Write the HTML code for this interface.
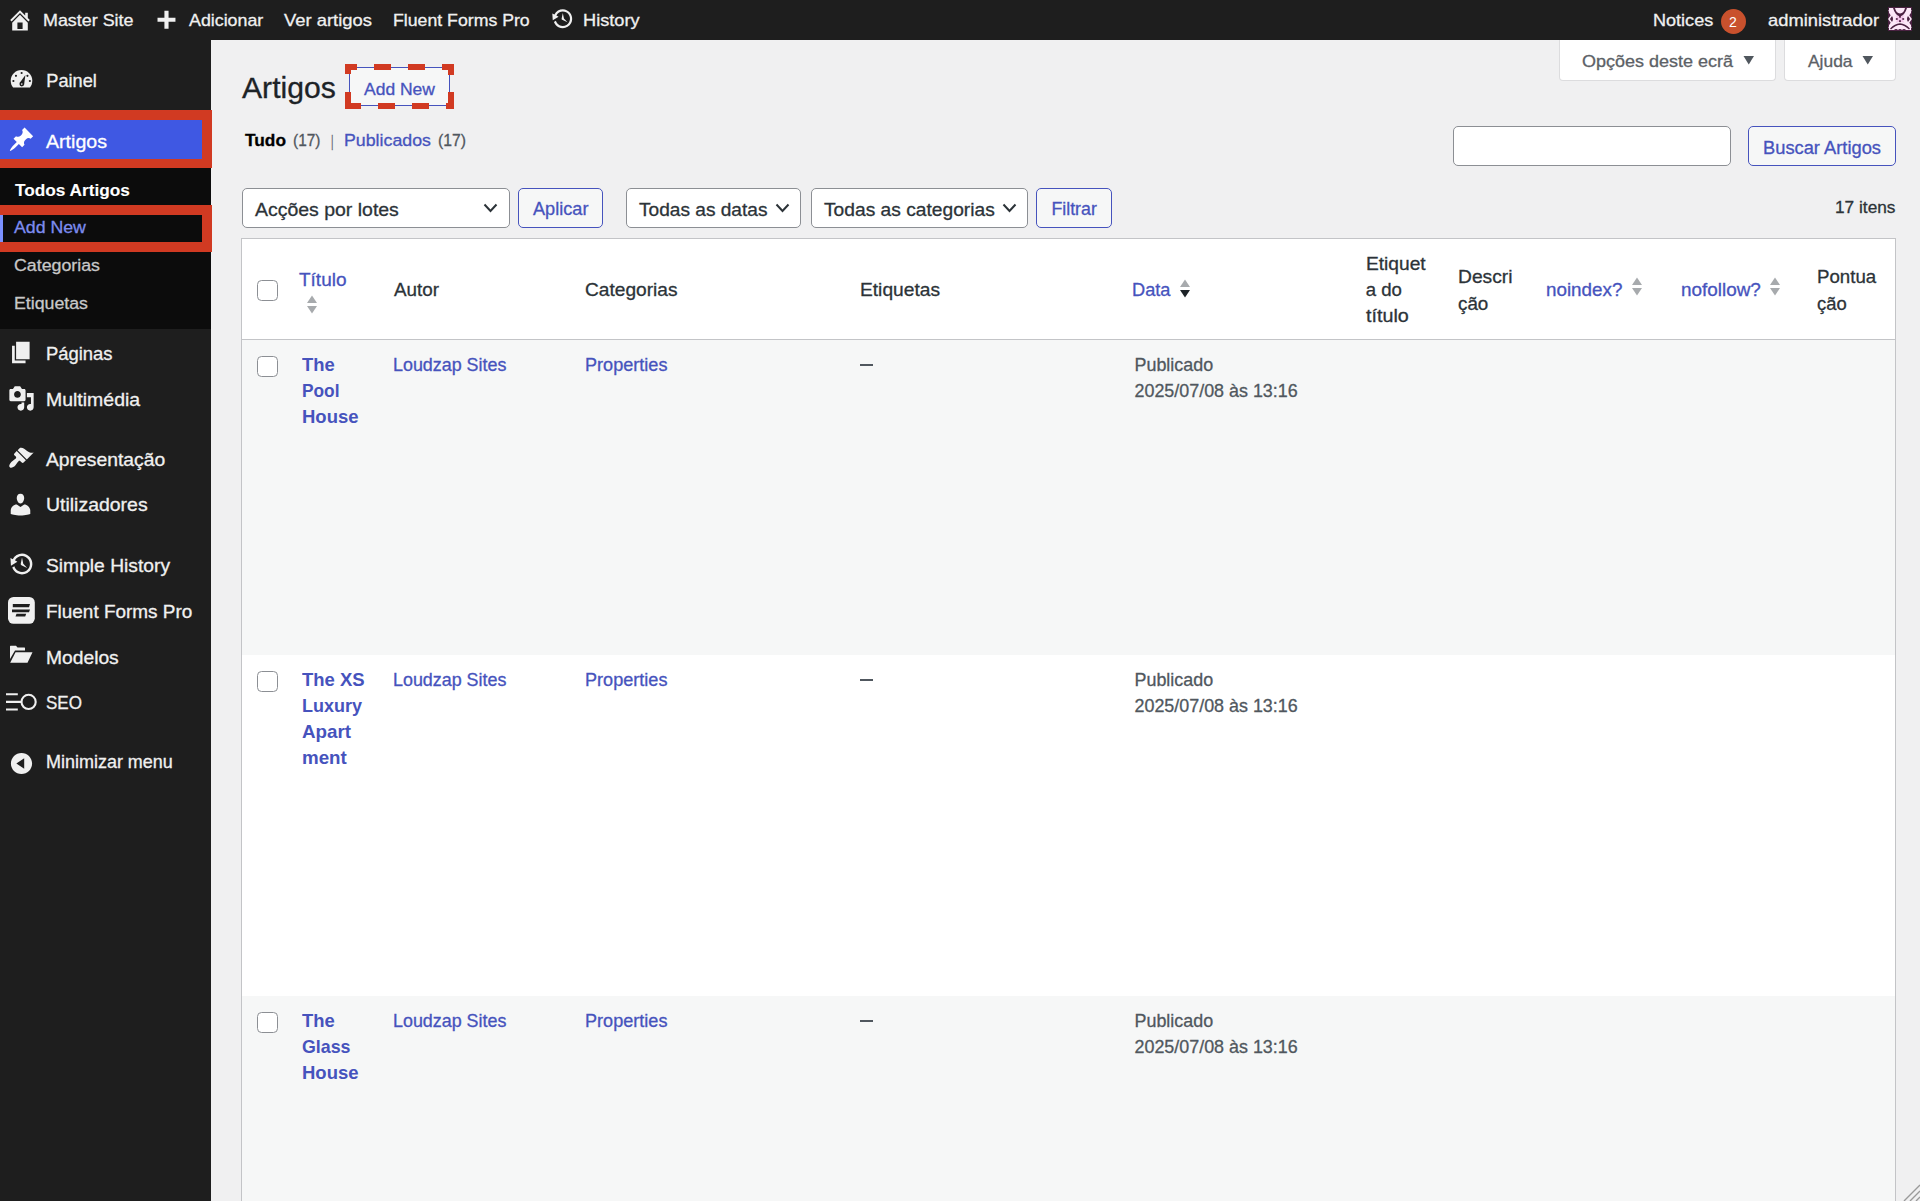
<!DOCTYPE html>
<html><head><meta charset="utf-8"><title>Artigos</title>
<style>
html,body{margin:0;padding:0;width:1920px;height:1201px;overflow:hidden;background:#f0f0f1;font-family:"Liberation Sans",sans-serif}
.t{position:absolute;white-space:nowrap;line-height:1;transform-origin:0 0;-webkit-text-stroke:0.3px currentColor}
svg{display:block}
</style></head><body>
<div style="position:absolute;left:0px;top:0px;width:1920px;height:1201px;background:#f0f0f1"></div>
<div style="position:absolute;left:0px;top:0px;width:1920px;height:40px;background:#1e1e1e"></div>
<div style="position:absolute;left:0px;top:40px;width:211px;height:1161px;background:#1e1e1e"></div>
<div style="position:absolute;left:0px;top:168px;width:211px;height:161px;background:#0c0c0c"></div>
<div style="position:absolute;left:0px;top:110px;width:212px;height:58px;background:#d13a22"></div>
<div style="position:absolute;left:0px;top:120px;width:202px;height:39px;background:#3f58e3"></div>
<div style="position:absolute;left:0px;top:205px;width:212px;height:47px;background:#d13a22"></div>
<div style="position:absolute;left:0px;top:215px;width:202px;height:27px;background:#0c0c0c"></div>
<div style="position:absolute;left:0px;top:215px;width:3px;height:27px;background:#7b90ff"></div>
<div class="t" style="left:42.50px;top:12.31px;font-size:17.0px;color:#f0f0f0;transform:scaleX(1.0527);">Master Site</div>
<div class="t" style="left:188.75px;top:12.31px;font-size:17.0px;color:#f0f0f0;transform:scaleX(1.0476);">Adicionar</div>
<div class="t" style="left:284.00px;top:12.31px;font-size:17.0px;color:#f0f0f0;transform:scaleX(1.0829);">Ver artigos</div>
<div class="t" style="left:392.80px;top:12.31px;font-size:17.0px;color:#f0f0f0;transform:scaleX(1.0411);">Fluent Forms Pro</div>
<div class="t" style="left:583.00px;top:12.31px;font-size:17.0px;color:#f0f0f0;transform:scaleX(1.0702);">History</div>
<div class="t" style="left:1652.80px;top:12.31px;font-size:17.0px;color:#f0f0f0;transform:scaleX(1.0621);">Notices</div>
<div class="t" style="left:1768.00px;top:12.31px;font-size:17.0px;color:#f0f0f0;transform:scaleX(1.0778);">administrador</div>
<div style="position:absolute;left:1721px;top:8.5px;width:25px;height:25.0px;background:#c9512d;border-radius:50%"></div>
<div class="t" style="left:1729.20px;top:14.00px;font-size:15.0px;color:#ffffff;transform:scaleX(0.9353);-webkit-text-stroke:0;">2</div>
<div class="t" style="left:46.25px;top:71.69px;font-size:18.2px;color:#f0f0f0;">Painel</div>
<div class="t" style="left:46.00px;top:132.79px;font-size:18.2px;color:#ffffff;transform:scaleX(1.0770);">Artigos</div>
<div class="t" style="left:15.00px;top:182.47px;font-size:17.4px;color:#ffffff;font-weight:700;transform:scaleX(0.9915);-webkit-text-stroke:0.1px #fff;">Todos Artigos</div>
<div class="t" style="left:14.00px;top:219.47px;font-size:17.4px;color:#7d8cf0;transform:scaleX(1.0192);">Add New</div>
<div class="t" style="left:14.00px;top:257.47px;font-size:17.4px;color:#c8c8c8;transform:scaleX(1.0220);">Categorias</div>
<div class="t" style="left:14.00px;top:295.07px;font-size:17.4px;color:#c8c8c8;transform:scaleX(1.0201);">Etiquetas</div>
<div class="t" style="left:45.80px;top:345.29px;font-size:18.2px;color:#f0f0f0;transform:scaleX(1.0125);">Páginas</div>
<div class="t" style="left:45.80px;top:390.59px;font-size:18.2px;color:#f0f0f0;transform:scaleX(1.0703);">Multimédia</div>
<div class="t" style="left:45.80px;top:450.59px;font-size:18.2px;color:#f0f0f0;transform:scaleX(1.0613);">Apresentação</div>
<div class="t" style="left:45.80px;top:496.49px;font-size:18.2px;color:#f0f0f0;transform:scaleX(1.0697);">Utilizadores</div>
<div class="t" style="left:45.90px;top:556.59px;font-size:18.2px;color:#f0f0f0;transform:scaleX(1.0578);">Simple History</div>
<div class="t" style="left:45.90px;top:603.09px;font-size:18.2px;color:#f0f0f0;transform:scaleX(1.0414);">Fluent Forms Pro</div>
<div class="t" style="left:45.90px;top:648.59px;font-size:18.2px;color:#f0f0f0;transform:scaleX(1.0582);">Modelos</div>
<div class="t" style="left:45.90px;top:694.09px;font-size:18.2px;color:#f0f0f0;transform:scaleX(0.9366);">SEO</div>
<div class="t" style="left:45.90px;top:752.99px;font-size:18.2px;color:#f0f0f0;transform:scaleX(0.9880);">Minimizar menu</div>
<div class="t" style="left:241.70px;top:73.43px;font-size:29.5px;color:#1d2327;transform:scaleX(1.0217);">Artigos</div>
<div style="position:absolute;left:349px;top:67px;width:101px;height:39px;background:#f6f7f7;border:1px solid #4653bd;border-radius:3px;box-sizing:border-box"></div>
<div style="position:absolute;left:344.6px;top:63.7px;width:12.399999999999977px;height:6.0px;background:#d13a22"></div>
<div style="position:absolute;left:373.9px;top:63.7px;width:17.600000000000023px;height:6.0px;background:#d13a22"></div>
<div style="position:absolute;left:407.7px;top:63.7px;width:17.600000000000023px;height:6.0px;background:#d13a22"></div>
<div style="position:absolute;left:442.3px;top:63.7px;width:11.399999999999977px;height:6.0px;background:#d13a22"></div>
<div style="position:absolute;left:344.6px;top:102.6px;width:16.299999999999955px;height:6.0px;background:#d13a22"></div>
<div style="position:absolute;left:377.9px;top:102.6px;width:17.5px;height:6.0px;background:#d13a22"></div>
<div style="position:absolute;left:412.3px;top:102.6px;width:16.899999999999977px;height:6.0px;background:#d13a22"></div>
<div style="position:absolute;left:445.6px;top:102.6px;width:8.099999999999966px;height:6.0px;background:#d13a22"></div>
<div style="position:absolute;left:344.6px;top:63.7px;width:6.0px;height:10.399999999999991px;background:#d13a22"></div>
<div style="position:absolute;left:344.6px;top:91.7px;width:6.0px;height:16.89999999999999px;background:#d13a22"></div>
<div style="position:absolute;left:447.7px;top:63.7px;width:6.0px;height:11.700000000000003px;background:#d13a22"></div>
<div style="position:absolute;left:447.7px;top:92.3px;width:6.0px;height:16.299999999999997px;background:#d13a22"></div>
<div class="t" style="left:364.00px;top:80.53px;font-size:16.5px;color:#4653bd;transform:scaleX(1.0599);">Add New</div>
<div class="t" style="left:245.00px;top:133.08px;font-size:16.8px;color:#000000;font-weight:700;transform:scaleX(1.0302);">Tudo</div>
<div class="t" style="left:292.50px;top:133.08px;font-size:16.8px;color:#50575e;transform:scaleX(0.9206);">(17)</div>
<div class="t" style="left:331.00px;top:134.18px;font-size:16.8px;color:#646970;transform:scaleX(0.5723);">|</div>
<div class="t" style="left:344.00px;top:133.08px;font-size:16.8px;color:#4653bd;transform:scaleX(1.0586);">Publicados</div>
<div class="t" style="left:437.70px;top:133.08px;font-size:16.8px;color:#50575e;transform:scaleX(0.9374);">(17)</div>
<div style="position:absolute;left:1559px;top:40px;width:217px;height:41px;background:#fff;border:1px solid #dcdcde;border-top:none;border-radius:0 0 4px 4px;box-sizing:border-box"></div>
<div style="position:absolute;left:1784px;top:40px;width:112px;height:41px;background:#fff;border:1px solid #dcdcde;border-top:none;border-radius:0 0 4px 4px;box-sizing:border-box"></div>
<div class="t" style="left:1582.00px;top:52.51px;font-size:17.0px;color:#5c6166;transform:scaleX(1.0582);">Opções deste ecrã</div>
<div class="t" style="left:1808.00px;top:52.51px;font-size:17.0px;color:#5c6166;transform:scaleX(1.0233);">Ajuda</div>
<svg style="position:absolute;left:1743px;top:55px" width="12" height="10"><path d="M0.5 1 L11 1 L5.75 9.5 Z" fill="#50575e"/></svg>
<svg style="position:absolute;left:1862px;top:55px" width="12" height="10"><path d="M0.5 1 L11 1 L5.75 9.5 Z" fill="#50575e"/></svg>
<div style="position:absolute;left:1453px;top:126px;width:278px;height:40px;background:#fff;border:1px solid #8c8f94;border-radius:5px;box-sizing:border-box"></div>
<div style="position:absolute;left:1748px;top:126px;width:148px;height:40px;background:#f6f7f7;border:1px solid #4653bd;border-radius:5px;box-sizing:border-box"></div>
<div class="t" style="left:1762.50px;top:139.75px;font-size:17.6px;color:#4653bd;transform:scaleX(1.0399);">Buscar Artigos</div>
<div class="t" style="left:1834.50px;top:199.34px;font-size:17.2px;color:#2c3338;transform:scaleX(1.0044);">17 itens</div>
<div style="position:absolute;left:242px;top:188px;width:268px;height:40px;background:#fff;border:1px solid #8c8f94;border-radius:5px;box-sizing:border-box"></div>
<div class="t" style="left:254.50px;top:200.76px;font-size:18.6px;color:#2c3338;transform:scaleX(1.0465);">Acções por lotes</div>
<svg style="position:absolute;left:482.5px;top:202px" width="16" height="12"><path d="M1.5 2.5 L7.5 9 L13.5 2.5" fill="none" stroke="#2c3338" stroke-width="2"/></svg>
<div style="position:absolute;left:518px;top:188px;width:85px;height:40px;background:#f6f7f7;border:1px solid #4653bd;border-radius:5px;box-sizing:border-box"></div>
<div class="t" style="left:533.00px;top:201.43px;font-size:17.8px;color:#4653bd;transform:scaleX(1.0199);">Aplicar</div>
<div style="position:absolute;left:626px;top:188px;width:175px;height:40px;background:#fff;border:1px solid #8c8f94;border-radius:5px;box-sizing:border-box"></div>
<div class="t" style="left:638.50px;top:200.76px;font-size:18.6px;color:#2c3338;transform:scaleX(1.0270);">Todas as datas</div>
<svg style="position:absolute;left:775px;top:202px" width="16" height="12"><path d="M1.5 2.5 L7.5 9 L13.5 2.5" fill="none" stroke="#2c3338" stroke-width="2"/></svg>
<div style="position:absolute;left:811px;top:188px;width:217px;height:40px;background:#fff;border:1px solid #8c8f94;border-radius:5px;box-sizing:border-box"></div>
<div class="t" style="left:823.50px;top:200.76px;font-size:18.6px;color:#2c3338;transform:scaleX(1.0325);">Todas as categorias</div>
<svg style="position:absolute;left:1002px;top:202px" width="16" height="12"><path d="M1.5 2.5 L7.5 9 L13.5 2.5" fill="none" stroke="#2c3338" stroke-width="2"/></svg>
<div style="position:absolute;left:1036px;top:188px;width:76px;height:40px;background:#f6f7f7;border:1px solid #4653bd;border-radius:5px;box-sizing:border-box"></div>
<div class="t" style="left:1051.40px;top:201.43px;font-size:17.8px;color:#4653bd;">Filtrar</div>
<div style="position:absolute;left:241px;top:238px;width:1655px;height:963px;background:#fff;border:1px solid #c3c4c7;border-bottom:none;box-sizing:border-box"></div>
<div style="position:absolute;left:242px;top:339px;width:1653px;height:1px;background:#c3c4c7"></div>
<div style="position:absolute;left:242px;top:340px;width:1653px;height:315px;background:#f6f7f7"></div>
<div style="position:absolute;left:242px;top:996px;width:1653px;height:205px;background:#f6f7f7"></div>
<div style="position:absolute;left:257px;top:280px;width:21px;height:21px;background:#fff;border:1.3px solid #8c8f94;border-radius:4.5px;box-sizing:border-box"></div>
<div class="t" style="left:298.75px;top:270.66px;font-size:18.6px;color:#4653bd;transform:scaleX(1.0211);">Título</div>
<div class="t" style="left:393.75px;top:281.16px;font-size:18.6px;color:#2c3338;transform:scaleX(1.0123);">Autor</div>
<div class="t" style="left:585.00px;top:281.16px;font-size:18.6px;color:#2c3338;transform:scaleX(1.0284);">Categorias</div>
<div class="t" style="left:859.50px;top:281.16px;font-size:18.6px;color:#2c3338;transform:scaleX(1.0317);">Etiquetas</div>
<div class="t" style="left:1132.00px;top:281.16px;font-size:18.6px;color:#4653bd;transform:scaleX(0.9796);">Data</div>
<div class="t" style="left:1365.70px;top:255.16px;font-size:18.6px;color:#2c3338;transform:scaleX(1.0311);">Etiquet</div>
<div class="t" style="left:1365.70px;top:281.16px;font-size:18.6px;color:#2c3338;">a do</div>
<div class="t" style="left:1365.70px;top:306.76px;font-size:18.6px;color:#2c3338;transform:scaleX(1.0614);">título</div>
<div class="t" style="left:1457.50px;top:268.16px;font-size:18.6px;color:#2c3338;transform:scaleX(1.0339);">Descri</div>
<div class="t" style="left:1457.50px;top:294.56px;font-size:18.6px;color:#2c3338;transform:scaleX(1.0106);">ção</div>
<div class="t" style="left:1546.40px;top:280.56px;font-size:18.6px;color:#4653bd;transform:scaleX(1.0120);">noindex?</div>
<div class="t" style="left:1680.50px;top:280.56px;font-size:18.6px;color:#4653bd;transform:scaleX(1.0167);">nofollow?</div>
<div class="t" style="left:1816.70px;top:268.16px;font-size:18.6px;color:#2c3338;transform:scaleX(1.0040);">Pontua</div>
<div class="t" style="left:1816.70px;top:294.56px;font-size:18.6px;color:#2c3338;transform:scaleX(0.9906);">ção</div>
<svg style="position:absolute;left:305.5px;top:294.5px" width="12" height="20"><path d="M6 0.5 L11 8 L1 8 Z" fill="#a7aaad"/><path d="M1 11 L11 11 L6 18.5 Z" fill="#a7aaad"/></svg>
<svg style="position:absolute;left:1178.5px;top:278.5px" width="12" height="20"><path d="M6 0.5 L11 8 L1 8 Z" fill="#a7aaad"/><path d="M1 11 L11 11 L6 18.5 Z" fill="#1d2327"/></svg>
<svg style="position:absolute;left:1631px;top:276.5px" width="12" height="20"><path d="M6 0.5 L11 8 L1 8 Z" fill="#a7aaad"/><path d="M1 11 L11 11 L6 18.5 Z" fill="#a7aaad"/></svg>
<svg style="position:absolute;left:1769px;top:276.5px" width="12" height="20"><path d="M6 0.5 L11 8 L1 8 Z" fill="#a7aaad"/><path d="M1 11 L11 11 L6 18.5 Z" fill="#a7aaad"/></svg>
<div style="position:absolute;left:257px;top:356px;width:21px;height:21px;background:#fff;border:1.3px solid #8c8f94;border-radius:4.5px;box-sizing:border-box"></div>
<div class="t" style="left:301.50px;top:357.00px;font-size:17.9px;color:#4653bd;font-weight:700;transform:scaleX(1.0306);-webkit-text-stroke:0;">The</div>
<div class="t" style="left:301.50px;top:382.90px;font-size:17.9px;color:#4653bd;font-weight:700;transform:scaleX(0.9668);-webkit-text-stroke:0;">Pool</div>
<div class="t" style="left:301.50px;top:408.80px;font-size:17.9px;color:#4653bd;font-weight:700;transform:scaleX(1.0329);-webkit-text-stroke:0;">House</div>
<div class="t" style="left:393.00px;top:357.00px;font-size:17.9px;color:#4653bd;">Loudzap Sites</div>
<div class="t" style="left:585.00px;top:357.00px;font-size:17.9px;color:#4653bd;transform:scaleX(1.0112);">Properties</div>
<div style="position:absolute;left:860px;top:364.25px;width:13px;height:2.0px;background:#50575e"></div>
<div class="t" style="left:1134.50px;top:357.00px;font-size:17.9px;color:#50575e;">Publicado</div>
<div class="t" style="left:1134.50px;top:383.00px;font-size:17.9px;color:#50575e;">2025/07/08 às 13:16</div>
<div style="position:absolute;left:257px;top:671px;width:21px;height:21px;background:#fff;border:1.3px solid #8c8f94;border-radius:4.5px;box-sizing:border-box"></div>
<div class="t" style="left:301.50px;top:672.00px;font-size:17.9px;color:#4653bd;font-weight:700;transform:scaleX(1.0333);-webkit-text-stroke:0;">The XS</div>
<div class="t" style="left:301.50px;top:697.90px;font-size:17.9px;color:#4653bd;font-weight:700;transform:scaleX(1.0054);-webkit-text-stroke:0;">Luxury</div>
<div class="t" style="left:301.50px;top:723.80px;font-size:17.9px;color:#4653bd;font-weight:700;transform:scaleX(1.0484);-webkit-text-stroke:0;">Apart</div>
<div class="t" style="left:301.50px;top:749.70px;font-size:17.9px;color:#4653bd;font-weight:700;transform:scaleX(1.0476);-webkit-text-stroke:0;">ment</div>
<div class="t" style="left:393.00px;top:672.00px;font-size:17.9px;color:#4653bd;">Loudzap Sites</div>
<div class="t" style="left:585.00px;top:672.00px;font-size:17.9px;color:#4653bd;transform:scaleX(1.0112);">Properties</div>
<div style="position:absolute;left:860px;top:679.25px;width:13px;height:2.0px;background:#50575e"></div>
<div class="t" style="left:1134.50px;top:672.00px;font-size:17.9px;color:#50575e;">Publicado</div>
<div class="t" style="left:1134.50px;top:698.00px;font-size:17.9px;color:#50575e;">2025/07/08 às 13:16</div>
<div style="position:absolute;left:257px;top:1012px;width:21px;height:21px;background:#fff;border:1.3px solid #8c8f94;border-radius:4.5px;box-sizing:border-box"></div>
<div class="t" style="left:301.50px;top:1012.75px;font-size:17.9px;color:#4653bd;font-weight:700;transform:scaleX(1.0306);-webkit-text-stroke:0;">The</div>
<div class="t" style="left:301.50px;top:1038.65px;font-size:17.9px;color:#4653bd;font-weight:700;transform:scaleX(0.9947);-webkit-text-stroke:0;">Glass</div>
<div class="t" style="left:301.50px;top:1064.55px;font-size:17.9px;color:#4653bd;font-weight:700;transform:scaleX(1.0329);-webkit-text-stroke:0;">House</div>
<div class="t" style="left:393.00px;top:1012.75px;font-size:17.9px;color:#4653bd;">Loudzap Sites</div>
<div class="t" style="left:585.00px;top:1012.75px;font-size:17.9px;color:#4653bd;transform:scaleX(1.0112);">Properties</div>
<div style="position:absolute;left:860px;top:1020px;width:13px;height:2px;background:#50575e"></div>
<div class="t" style="left:1134.50px;top:1012.75px;font-size:17.9px;color:#50575e;">Publicado</div>
<div class="t" style="left:1134.50px;top:1038.75px;font-size:17.9px;color:#50575e;">2025/07/08 às 13:16</div>
<svg style="position:absolute;left:1900px;top:1181px" width="20" height="20"><path d="M4 20 L20 4 M10 20 L20 10 M16 20 L20 16" stroke="#9a9a9a" stroke-width="1.4"/></svg>
<svg style="position:absolute;left:6.79px;top:6.75px" width="26.00" height="26.00" viewBox="0 0 20 20"><path fill="#f0f0f0" d="M16 8.5l1.53 1.53-1.06 1.06L10 4.62l-6.47 6.47-1.06-1.06L10 2.5l4 4v-2h2v4zm-6-2.46l6 5.99V18H4v-5.97zM12 17v-5H8v5h4z"/></svg>
<svg style="position:absolute;left:152.48px;top:8.24px" width="27.60" height="27.60" viewBox="0 0 20 20"><path fill="#f0f0f0" d="M17 7v3h-5v5H9v-5H4V7h5V2h3v5h5z"/></svg>
<svg style="position:absolute;left:550.70px;top:6.64px" width="23.60" height="23.60" viewBox="0 0 20 20"><path fill="#f0f0f0" d="M13.65 2.88c3.93 2.01 5.48 6.84 3.47 10.770s-6.83 5.48-10.77 3.47c-1.870-.96-3.200-2.56-3.860-4.400l1.640-1.030c.45 1.570 1.520 2.950 3.080 3.760 3.010 1.540 6.690.35 8.230-2.660 1.550-3.010.36-6.690-2.650-8.240C9.780 3.010 6.100 4.200 4.560 7.210l1.880.97-4.950 3.080-.39-5.820 1.780.91C4.900 2.400 9.750.89 13.650 2.880zm-4.360 7.830C9.110 10.530 9.000 10.280 9.000 10.000c0-.07.03-.12.04-.19h-.01L10.000 5.000l.97 4.810L14.000 13.000l-4.500-2.120.02-.02c-.08-.04-.16-.09-.23-.15z"/></svg>
<svg style="position:absolute;left:7.7px;top:65.5px" width="27" height="27" viewBox="0 0 20 20"><path fill="#f0f0f0" d="M3.76 16h12.48c1.1-1.37 1.76-3.11 1.76-5 0-4.42-3.58-8-8-8s-8 3.58-8 8c0 1.89.66 3.63 1.76 5z"/><g fill="#1e1e1e"><circle cx="10.1" cy="5.2" r="0.8"/><circle cx="5.9" cy="7.3" r="0.8"/><circle cx="14.4" cy="7.3" r="0.8"/><circle cx="4.0" cy="11.1" r="0.8"/><circle cx="16.2" cy="11.1" r="0.8"/><path d="M8.6 12.6 L12.9 6.6 L11.9 13.9 Z"/><circle cx="10.2" cy="13.4" r="1.75"/></g><circle cx="10.2" cy="13.4" r="0.6" fill="#f0f0f0"/></svg>
<svg style="position:absolute;left:7.98px;top:126.38px" width="27.00" height="27.00" viewBox="0 0 20 20"><path fill="#ffffff" d="M10.44 3.02l1.82-1.82 6.36 6.35-1.83 1.82c-1.05-.68-2.48-.57-3.41.36l-.75.75c-.92.93-1.04 2.35-.35 3.41l-1.83 1.82-2.41-2.41-2.8 2.79c-.42.42-3.38 2.71-3.8 2.29s1.86-3.39 2.28-3.81l2.79-2.79L4.1 9.36l1.83-1.82c1.05.69 2.48.57 3.4-.36l.75-.75c.93-.92 1.05-2.35.36-3.41z"/></svg>
<svg style="position:absolute;left:8.00px;top:338.90px" width="27.00" height="27.00" viewBox="0 0 20 20"><path fill="#f0f0f0" d="M6 15V2h10v13H6zm-1 1h8v2H3V5h2v11z"/></svg>
<svg style="position:absolute;left:7.65px;top:384.85px" width="27.00" height="27.00" viewBox="0 0 20 20"><path fill="#f0f0f0" d="M13 11V4c0-.55-.45-1-1-1h-1.67L9 1H5L3.67 3H2c-.55 0-1 .45-1 1v7c0 .55.45 1 1 1h10c.55 0 1-.45 1-1zM7 4.5c1.38 0 2.5 1.12 2.5 2.5S8.38 9.5 7 9.5 4.5 8.38 4.5 7 5.620 4.5 7 4.5zM14 6h5v10.5c0 1.38-1.12 2.5-2.5 2.5S14 17.88 14 16.5s1.12-2.5 2.5-2.5c.17 0 .34.02.5.05V9h-3V6zm-4 8.05V13h2v3.5c0 1.38-1.12 2.5-2.5 2.5S7 17.88 7 16.5 8.12 14 9.5 14c.17 0 .34.02.5.05z"/></svg>
<svg style="position:absolute;left:7.83px;top:445.40px" width="26.00" height="26.00" viewBox="0 0 20 20"><path fill="#f0f0f0" d="M14.48 11.06L7.41 3.99l1.5-1.5c.5-.56 2.3-.47 3.51.32 1.21.8 1.43 1.28 2.91 2.1 1.18.64 2.45 1.26 4.45.85zm-.71.71L6.7 4.7 4.93 6.47c-.39.39-.39 1.02 0 1.41l1.06 1.06c.39.39.39 1.03 0 1.42-.6.6-1.43 1.11-2.21 1.69-.35.26-.7.53-1.01.84C1.43 14.23.4 16.08 1.4 17.07c.99 1 2.84-.03 4.18-1.36.31-.31.58-.66.85-1.02.57-.78 1.080-1.610 1.690-2.210.39-.39 1.020-.39 1.410 0l1.060 1.060c.39.39 1.020.39 1.410 0z"/></svg>
<svg style="position:absolute;left:7.07px;top:491.30px" width="27.00" height="27.00" viewBox="0 0 20 20"><path fill="#f0f0f0" d="M10 9.25c-2.27 0-2.73-3.44-2.73-3.44C7 4.02 7.82 2 9.97 2c2.16 0 2.98 2.02 2.71 3.81 0 0-.41 3.44-2.68 3.44zm0 2.57L12.72 10c2.39 0 4.52 2.33 4.52 4.53v2.49s-3.65 1.13-7.24 1.13c-3.65 0-7.24-1.13-7.24-1.13v-2.49c0-2.25 1.94-4.48 4.47-4.48z"/></svg>
<svg style="position:absolute;left:8.97px;top:551.20px" width="26.00" height="26.00" viewBox="0 0 20 20"><path fill="#f0f0f0" d="M13.65 2.88c3.93 2.01 5.48 6.84 3.47 10.770s-6.83 5.48-10.77 3.47c-1.870-.96-3.200-2.56-3.860-4.400l1.640-1.030c.45 1.570 1.520 2.950 3.080 3.760 3.010 1.540 6.690.35 8.230-2.660 1.550-3.010.36-6.690-2.650-8.240C9.780 3.010 6.100 4.200 4.560 7.210l1.880.97-4.950 3.080-.39-5.820 1.780.91C4.900 2.400 9.750.89 13.650 2.880zm-4.360 7.830C9.110 10.530 9.000 10.280 9.000 10.000c0-.07.03-.12.04-.19h-.01L10.000 5.000l.97 4.810L14.000 13.000l-4.500-2.120.02-.02c-.08-.04-.16-.09-.23-.15z"/></svg>
<svg style="position:absolute;left:7.88px;top:750.08px" width="27.00" height="27.00" viewBox="0 0 20 20"><path fill="#f0f0f0" d="M10 2.16c4.33 0 7.84 3.51 7.84 7.84S14.33 17.84 10 17.84 2.16 14.33 2.16 10 5.710 2.160 10 2.160zm2 11.72V6.12L6.18 9.97z"/></svg>
<svg style="position:absolute;left:8px;top:597px" width="27" height="27" viewBox="0 0 27 27"><rect x="0" y="0" width="26.8" height="26.8" rx="5.5" fill="#f0f0f0"/><path d="M4.8 7 L22 7 L21 10.3 L4.8 10.3 Z M4 12.5 L22 12.5 L21 15.2 L4 15.2 Z M8.5 16.8 L18.2 16.8 L17.2 19.5 L7.5 19.5 Z" fill="#1e1e1e"/></svg>
<svg style="position:absolute;left:9px;top:645px" width="25" height="19" viewBox="0 0 25 19"><path d="M1 1.2 Q1 0.8 1.5 0.8 L7 0.8 L8.5 2.6 L15.5 2.6 Q16 2.6 16 3.2 L16 5.5 L6 5.5 L1 14 Z" fill="#f0f0f0"/><path d="M6.5 7.2 L23.5 7.2 L18.5 17.8 L1.2 17.8 Z" fill="#f0f0f0"/></svg>
<svg style="position:absolute;left:5px;top:692px" width="33" height="20" viewBox="0 0 33 20"><path d="M1 2.3 H12.8 M1 9.9 H16 M1 17.5 H12.8" stroke="#f0f0f0" stroke-width="2.1"/><circle cx="23.6" cy="9.9" r="7.1" fill="none" stroke="#f0f0f0" stroke-width="2.1"/></svg>
<svg style="position:absolute;left:1888px;top:7px" width="24" height="24" viewBox="0 0 24 24"><rect width="24" height="24" fill="#4a2242"/><path d="M1 1 L5 1 Q7 8 12 9.5 Q17 8 19 1 L23 1 L23 6 Q19 9 19 12 Q19 15 23 18 L23 23 L1 23 L1 18 Q5 15 5 12 Q5 9 1 6 Z" fill="#fbe8f8"/><path d="M7 1 L17 1 Q16 6 12 6.5 Q8 6 7 1 Z" fill="#fbe8f8"/><path d="M7.5 8 Q12 11 16.5 8 Q13.5 12 16.5 16 Q12 13 7.5 16 Q10.5 12 7.5 8 Z" fill="#f2c6ea"/><g fill="#5a2a50"><circle cx="12" cy="9.8" r="1.1"/><circle cx="8.8" cy="12" r="1.1"/><circle cx="15.2" cy="12" r="1.1"/><circle cx="12" cy="14.2" r="1.1"/></g><path d="M1 3 L3.5 8.5 L1 12 L3.5 15.5 L1 21 M23 3 L20.5 8.5 L23 12 L20.5 15.5 L23 21" fill="none" stroke="#fbe8f8" stroke-width="1.5"/><path d="M2.5 22 Q7 17.5 12 17 Q17 17.5 21.5 22" fill="none" stroke="#4a2242" stroke-width="1.3"/><path d="M6 23 Q8 21 10 23 Q12 21 14 23 Q16 21 18 23 Z" fill="#4a2242"/></svg>

</body></html>
